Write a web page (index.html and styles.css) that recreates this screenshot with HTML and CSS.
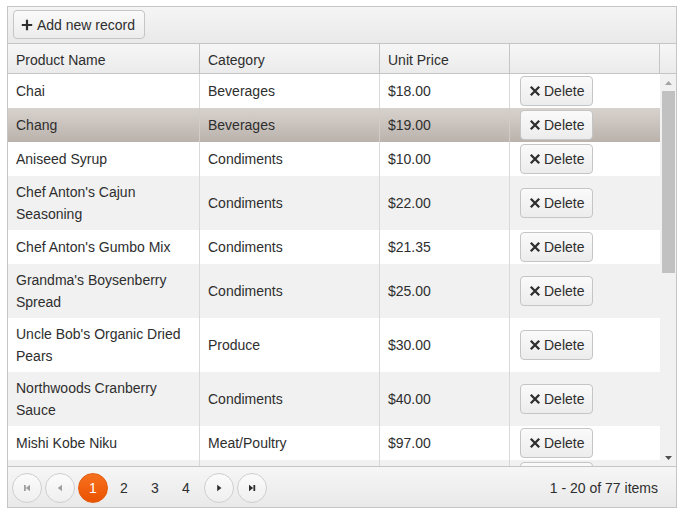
FILE: index.html
```html
<!DOCTYPE html>
<html>
<head>
<meta charset="utf-8">
<title>Grid</title>
<link rel="stylesheet" href="styles.css">
</head>
<body>
<div class="grid">
  <div class="toolbar">
    <button class="btn add-btn"><svg class="icon" viewBox="0 0 16 16"><path d="M8 2.8v10.4M2.8 8h10.4" stroke="#2e2e2e" stroke-width="2.2" fill="none"/></svg>Add new record</button>
  </div>
  <div class="header">
    <div class="hcell">Product Name</div>
    <div class="hcell">Category</div>
    <div class="hcell">Unit Price</div>
    <div class="hcell"></div>
    <div class="hcell"></div>
  </div>
  <div class="body">
    <div class="rows">
      <div class="row"><div class="cell">Chai</div><div class="cell">Beverages</div><div class="cell">$18.00</div><div class="cell cmd"><button class="btn del-btn"><svg class="icon" viewBox="0 0 16 16"><path d="M3.8 3.8l8.4 8.4M12.2 3.8l-8.4 8.4" stroke="#2e2e2e" stroke-width="2.3" fill="none"/></svg>Delete</button></div></div>
      <div class="row selected"><div class="cell">Chang</div><div class="cell">Beverages</div><div class="cell">$19.00</div><div class="cell cmd"><button class="btn del-btn"><svg class="icon" viewBox="0 0 16 16"><path d="M3.8 3.8l8.4 8.4M12.2 3.8l-8.4 8.4" stroke="#2e2e2e" stroke-width="2.3" fill="none"/></svg>Delete</button></div></div>
      <div class="row"><div class="cell">Aniseed Syrup</div><div class="cell">Condiments</div><div class="cell">$10.00</div><div class="cell cmd"><button class="btn del-btn"><svg class="icon" viewBox="0 0 16 16"><path d="M3.8 3.8l8.4 8.4M12.2 3.8l-8.4 8.4" stroke="#2e2e2e" stroke-width="2.3" fill="none"/></svg>Delete</button></div></div>
      <div class="row alt"><div class="cell">Chef Anton's Cajun Seasoning</div><div class="cell">Condiments</div><div class="cell">$22.00</div><div class="cell cmd"><button class="btn del-btn"><svg class="icon" viewBox="0 0 16 16"><path d="M3.8 3.8l8.4 8.4M12.2 3.8l-8.4 8.4" stroke="#2e2e2e" stroke-width="2.3" fill="none"/></svg>Delete</button></div></div>
      <div class="row"><div class="cell">Chef Anton's Gumbo Mix</div><div class="cell">Condiments</div><div class="cell">$21.35</div><div class="cell cmd"><button class="btn del-btn"><svg class="icon" viewBox="0 0 16 16"><path d="M3.8 3.8l8.4 8.4M12.2 3.8l-8.4 8.4" stroke="#2e2e2e" stroke-width="2.3" fill="none"/></svg>Delete</button></div></div>
      <div class="row alt"><div class="cell">Grandma's Boysenberry Spread</div><div class="cell">Condiments</div><div class="cell">$25.00</div><div class="cell cmd"><button class="btn del-btn"><svg class="icon" viewBox="0 0 16 16"><path d="M3.8 3.8l8.4 8.4M12.2 3.8l-8.4 8.4" stroke="#2e2e2e" stroke-width="2.3" fill="none"/></svg>Delete</button></div></div>
      <div class="row"><div class="cell">Uncle Bob's Organic Dried Pears</div><div class="cell">Produce</div><div class="cell">$30.00</div><div class="cell cmd"><button class="btn del-btn"><svg class="icon" viewBox="0 0 16 16"><path d="M3.8 3.8l8.4 8.4M12.2 3.8l-8.4 8.4" stroke="#2e2e2e" stroke-width="2.3" fill="none"/></svg>Delete</button></div></div>
      <div class="row alt"><div class="cell">Northwoods Cranberry Sauce</div><div class="cell">Condiments</div><div class="cell">$40.00</div><div class="cell cmd"><button class="btn del-btn"><svg class="icon" viewBox="0 0 16 16"><path d="M3.8 3.8l8.4 8.4M12.2 3.8l-8.4 8.4" stroke="#2e2e2e" stroke-width="2.3" fill="none"/></svg>Delete</button></div></div>
      <div class="row"><div class="cell">Mishi Kobe Niku</div><div class="cell">Meat/Poultry</div><div class="cell">$97.00</div><div class="cell cmd"><button class="btn del-btn"><svg class="icon" viewBox="0 0 16 16"><path d="M3.8 3.8l8.4 8.4M12.2 3.8l-8.4 8.4" stroke="#2e2e2e" stroke-width="2.3" fill="none"/></svg>Delete</button></div></div>
      <div class="row alt"><div class="cell">Ikura</div><div class="cell">Seafood</div><div class="cell">$31.00</div><div class="cell cmd"><button class="btn del-btn"><svg class="icon" viewBox="0 0 16 16"><path d="M3.8 3.8l8.4 8.4M12.2 3.8l-8.4 8.4" stroke="#2e2e2e" stroke-width="2.3" fill="none"/></svg>Delete</button></div></div>
    </div>
    <div class="scrollbar">
      <div class="sb-arrow"><svg viewBox="0 0 7 4" class="sb-tri"><polygon points="0,4 7,4 3.5,0" fill="#a3a3a3"/></svg></div>
      <div class="sb-track"><div class="sb-thumb"></div></div>
      <div class="sb-arrow"><svg viewBox="0 0 7 4" class="sb-tri"><polygon points="0,0 7,0 3.5,4" fill="#505050"/></svg></div>
    </div>
  </div>
  <div class="pager">
    <span class="pbtn disabled"><svg viewBox="0 0 16 16" class="picon"><rect x="5" y="5" width="1.8" height="6" fill="#9e9e9e"/><polygon points="11,4.8 11,11.2 6.8,8" fill="#9e9e9e"/></svg></span>
    <span class="pbtn disabled"><svg viewBox="0 0 16 16" class="picon"><polygon points="10,4.8 10,11.2 5.8,8" fill="#9e9e9e"/></svg></span>
    <div class="pages">
      <span class="page current">1</span>
      <span class="page">2</span>
      <span class="page">3</span>
      <span class="page">4</span>
    </div>
    <span class="pbtn"><svg viewBox="0 0 16 16" class="picon"><polygon points="6.2,4.8 6.2,11.2 10.4,8" fill="#2e2e2e"/></svg></span>
    <span class="pbtn"><svg viewBox="0 0 16 16" class="picon"><polygon points="5,4.8 5,11.2 9.2,8" fill="#2e2e2e"/><rect x="9.4" y="5" width="1.8" height="6" fill="#2e2e2e"/></svg></span>
    <span class="pinfo">1 - 20 of 77 items</span>
  </div>
</div>
</body>
</html>
```

FILE: styles.css
```css
* { box-sizing: border-box; }

html, body { margin: 0; padding: 0; background: #ffffff; }

body {
  padding: 6px 8px 0 7px;
  font-family: "Liberation Sans", Arial, sans-serif;
  font-size: 14px;
  color: #2e2e2e;
}

.grid {
  width: 670px;
  height: 502px;
  border: 1px solid #c5c5c5;
  display: flex;
  flex-direction: column;
  overflow: hidden;
}

.toolbar {
  height: 38px;
  padding: 3px 0 0 5px;
  border-bottom: 1px solid #c5c5c5;
  background: linear-gradient(#f5f5f5, #e9e9e9);
}

.btn {
  display: inline-flex;
  align-items: center;
  font-family: inherit;
  font-size: 14px;
  color: #2e2e2e;
  border: 1px solid #c5c5c5;
  border-radius: 4px;
  background: linear-gradient(#fafafa, #ececec);
  margin: 0;
  cursor: pointer;
}

.icon { width: 16px; height: 16px; flex: none; }

.add-btn {
  width: 132px;
  height: 29px;
  padding: 0 0 0 5px;
  gap: 2px;
}

.header {
  display: grid;
  grid-template-columns: 191px 180px 130px 150px 17px;
  height: 30px;
  border-bottom: 1px solid #c5c5c5;
  background: linear-gradient(#f6f6f6, #ebebeb);
}

.hcell {
  padding: 5px 8px 1px;
  line-height: 22px;
  white-space: nowrap;
  overflow: hidden;
}

.hcell + .hcell { border-left: 1px solid #c5c5c5; }

.body {
  display: flex;
  height: 392px;
  flex: none;
}

.rows {
  width: 652px;
  height: 392px;
  overflow: hidden;
}

.row {
  display: grid;
  grid-template-columns: 191px 180px 130px 151px;
  background: #ffffff;
}

.row.alt { background: #f1f1f1; }

.row.selected { background: linear-gradient(#d8d2ce, #bab2ab); }

.cell {
  display: flex;
  align-items: center;
  padding: 5px 8px;
  line-height: 22px;
}

.cell + .cell { border-left: 1px solid #d9d9d9; }

.row.selected .cell + .cell { border-left-color: #d2ccc8; }

.cell.cmd { padding: 2px 8px 2px 10px; }

.del-btn {
  width: 73px;
  height: 30px;
  padding: 0 0 0 6px;
  gap: 1px;
}

.scrollbar {
  width: 16px;
  background: #f1f1f1;
  display: flex;
  flex-direction: column;
}

.sb-arrow {
  height: 17px;
  display: flex;
  align-items: center;
  justify-content: center;
  flex: none;
}

.sb-tri { width: 7px; height: 4px; display: block; }

.sb-track {
  flex: 1;
  padding: 0 1px 0 2px;
}

.sb-thumb {
  height: 182px;
  background: #c1c1c1;
}

.pager {
  height: 41px;
  flex: none;
  border-top: 1px solid #c5c5c5;
  background: linear-gradient(#f6f6f6, #e9e9e9);
  display: flex;
  align-items: center;
  gap: 3px;
  padding: 1px 18px 0 4px;
}

.pbtn {
  width: 30px;
  height: 30px;
  border-radius: 50%;
  border: 1px solid #cfcfcf;
  background: linear-gradient(#fbfbfb, #efefef);
  display: flex;
  align-items: center;
  justify-content: center;
}

.picon { width: 16px; height: 16px; display: block; }

.pages {
  display: flex;
  gap: 1px;
}

.page {
  width: 30px;
  height: 30px;
  border-radius: 50%;
  display: flex;
  align-items: center;
  justify-content: center;
}

.page.current {
  color: #ffffff;
  background: linear-gradient(#f7711f, #ea5200);
  border: 1px solid #e35a0a;
}

.pinfo { margin-left: auto; white-space: nowrap; }
```
